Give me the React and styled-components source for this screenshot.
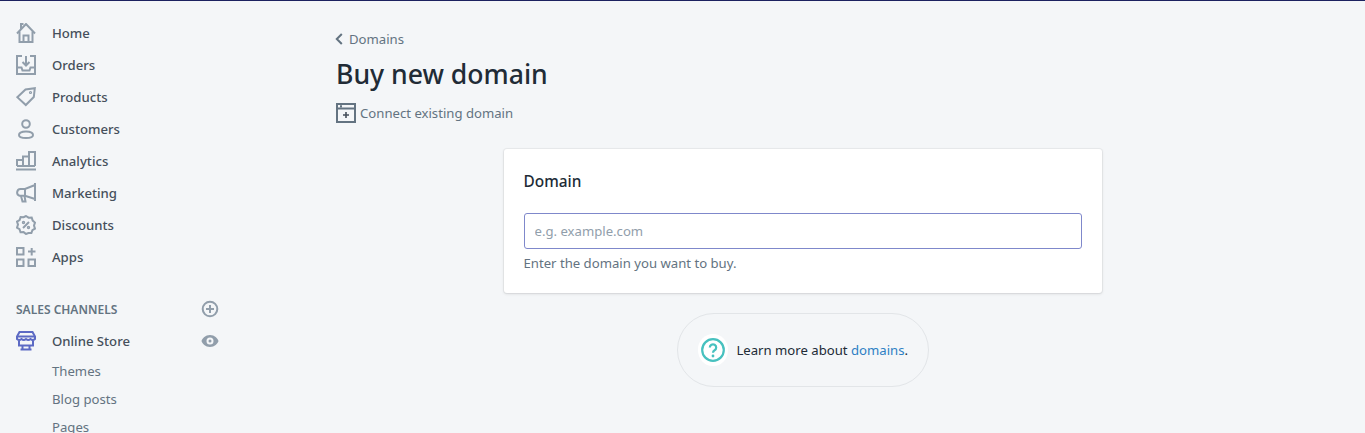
import styled, { createGlobalStyle } from "styled-components"

const Global = createGlobalStyle`
    html, body {
        margin: 0;
        padding: 0;
        height: 100%;
        overflow: hidden;
        background: #f4f6f8;
    }
    body {
        font-family: "Noto Sans", "Open Sans", sans-serif;
        color: #212b36;
    }
`;

const icons = {
    home: <>
        <path d="M1 10.500 10 1l9 9.500M5 5.800V1h2.500" />
        <path d="M3.500 8.500V19h13V8.500" />
        <path d="M7.500 19v-6.500h5V19" />
    </>,
    orders: <>
        <path d="M6 1H1v18h18V1h-5" />
        <path d="M1 12.500h4.500l1 3h7l1-3H19" />
        <path d="M10 1v9M6.500 7l3.500 3.500L13.500 7" />
    </>,
    products: <>
        <path d="M1.300 10.200 9.500 2.500l9.300-1.300-1 8.800-8 8z" />
        <circle cx="14.500" cy="5.500" r=".6" />
    </>,
    customers: <>
        <circle cx="10" cy="5" r="3.800" />
        <path d="M3 16c0-2.400 3-3.500 7-3.500s7 1.100 7 3.500c0 1.900-3 3-7 3s-7-1.100-7-3z" />
    </>,
    analytics: <>
        <path d="M0 18.500h20" />
        <path d="M1 15V9h6v6M7 15V5.500h6V15M13 15V1h6v14M1 15h18" />
    </>,
    marketing: <>
        <path d="M19 0v18M19 2 9 6H4.500a3.500 3.500 0 0 0-1 6.800H9l10 3.200" />
        <path d="M9 6v7M5 13l1.500 5.500h3L8.500 13" />
    </>,
    discounts: <>
        <path d="M10 1l2.600 1.700 3.100-.1 1 3 2.300 2-1 3 1 3-2.600 1.600-1 2.900-3-.1L10 19l-2.400-1.900-3.100.1-1-3L1 12.600l1-3-1-3 2.600-1.600 1-2.900 3 .1z" />
        <path d="m7 13 6-6" />
        <circle cx="7.500" cy="7.500" r=".7" />
        <circle cx="12.500" cy="12.500" r=".7" />
    </>,
    apps: <>
        <path d="M1 1h6.500v6.500H1zM1 12.500h6.500V19H1zM12.500 12.500H19V19h-6.500zM15.700 1v7.500M12 4.500h7.500" />
    </>,
}

const navItems = [
    ["home", "Home"],
    ["orders", "Orders"],
    ["products", "Products"],
    ["customers", "Customers"],
    ["analytics", "Analytics"],
    ["marketing", "Marketing"],
    ["discounts", "Discounts"],
    ["apps", "Apps"],
]

function NavIcon({ name }) {
    return (
        <Icon viewBox="0 0 20 20">
            {icons[name]}
        </Icon>
    )
}

export default function App() {
    return (
        <Page>
            <Global />
            <TopLine />
            <Layout>
                <Sidebar>
                    <NavList>
                        {navItems.map(([name, label]) => (
                            <NavItem key={name}>
                                <NavIcon name={name} />
                                <span>{label}</span>
                            </NavItem>
                        ))}
                    </NavList>
                    <ChannelsHead>
                        <ChannelsTitle>SALES CHANNELS</ChannelsTitle>
                        <SideAction viewBox="0 0 20 20">
                            <circle cx="10" cy="10" r="7.300" fill="none" stroke="#919eab" strokeWidth="2" />
                            <path d="M10 6v8M6 10h8" fill="none" stroke="#919eab" strokeWidth="2" />
                        </SideAction>
                    </ChannelsHead>
                    <StoreRow>
                        <StoreIcon viewBox="0 0 20 20">
                            <path d="M3.500 1h13L19 5.500V8c-1.500 1.300-3 1.300-4.500 0-1.500 1.300-3 1.300-4.500 0-1.500 1.300-3 1.300-4.500 0C4 9.300 2.500 9.300 1 8V5.500z" />
                            <path d="M1 5.500h18M3 9.500V14.500h14V9.500M6.500 14.500V18M13.500 14.500V18M4.500 18.500h11" />
                        </StoreIcon>
                        <span>Online Store</span>
                        <EyeAction viewBox="0 0 20 20">
                            <path fill="#919eab" fillRule="evenodd" d="M10 4C5.500 4 2.200 7.500 1.500 10c.7 2.500 4 6 8.500 6s7.800-3.500 8.500-6C17.800 7.500 14.500 4 10 4zm0 9.500a3.500 3.500 0 1 1 0-7 3.500 3.500 0 0 1 0 7zm0-2a1.500 1.500 0 1 0 0-3 1.500 1.500 0 0 0 0 3z" />
                        </EyeAction>
                    </StoreRow>
                    <SubList>
                        <SubItem>Themes</SubItem>
                        <SubItem>Blog posts</SubItem>
                        <SubItem>Pages</SubItem>
                    </SubList>
                </Sidebar>
                <Main>
                    <Back>
                        <svg width="8" height="12" viewBox="0 0 8 12">
                            <path d="M6.800 1 1.800 6l5 5" fill="none" stroke="#637381" strokeWidth="2" />
                        </svg>
                        <span>Domains</span>
                    </Back>
                    <Title>Buy new domain</Title>
                    <Connect>
                        <svg width="20" height="20" viewBox="0 0 20 20">
                            <path d="M1 1h18v18H1zM1 5.500h18M4 3.200h2" fill="none" stroke="#637381" strokeWidth="2" />
                            <path d="M10 9v6M7 12h6" fill="none" stroke="#454f5b" strokeWidth="1.600" />
                        </svg>
                        <span>Connect existing domain</span>
                    </Connect>
                    <Card>
                        <CardTitle>Domain</CardTitle>
                        <Input placeholder="e.g. example.com" />
                        <Help>Enter the domain you want to buy.</Help>
                    </Card>
                    <Footer>
                        <QuestionBadge>
                            <svg width="24" height="24" viewBox="0 0 24 24">
                                <circle cx="12" cy="12" r="10.800" fill="none" stroke="#47c1bf" strokeWidth="2.200" />
                                <path d="M8.800 9.500a3.200 3.200 0 1 1 4.800 2.800c-1 .6-1.600 1.100-1.600 2.400" fill="none" stroke="#47c1bf" strokeWidth="2.200" />
                                <circle cx="12" cy="18" r="1.400" fill="#47c1bf" />
                            </svg>
                        </QuestionBadge>
                        <span>Learn more about <FooterLink>domains</FooterLink>.</span>
                    </Footer>
                </Main>
            </Layout>
        </Page>
    )
}

const Page = styled.div`
    height: 433px;
    overflow: hidden;
    background: #f4f6f8;
`;

const TopLine = styled.div`
    height: 1px;
    background: #1c2260;
`;

const Layout = styled.div`
    display: flex;
`;

const Sidebar = styled.nav`
    width: 240px;
    flex-shrink: 0;
    padding-top: 16px;
    box-sizing: border-box;
`;

const NavList = styled.div`
    display: flex;
    flex-direction: column;
`;

const NavItem = styled.div`
    display: flex;
    align-items: center;
    height: 32px;
    padding: 0 21px 0 16px;
    gap: 16px;
    font-size: 13.15px;
    font-weight: 500;
    color: #454f5b;
`;

const StoreRow = styled(NavItem)`
    margin-top: 6px;
`;

const Icon = styled.svg`
    width: 20px;
    height: 20px;
    fill: none;
    stroke: #919eab;
    stroke-width: 2;
    flex-shrink: 0;
`;

const ChannelsHead = styled.div`
    display: flex;
    align-items: center;
    justify-content: space-between;
    height: 20px;
    margin-top: 26px;
    padding: 0 20px 0 16px;
`;

const ChannelsTitle = styled.div`
    font-size: 12px;
    font-weight: 600;
    color: #637381;
`;

const SideAction = styled.svg`
    width: 20px;
    height: 20px;
`;

const EyeAction = styled(SideAction)`
    margin-left: auto;
    margin-right: -1px;
`;

const StoreIcon = styled(Icon)`
    stroke: #5c6ac4;
`;

const SubList = styled.div`
    display: flex;
    flex-direction: column;
    padding-left: 52px;
`;

const SubItem = styled.div`
    height: 28px;
    line-height: 28px;
    font-size: 13.15px;
    color: #637381;
`;

const Main = styled.main`
    flex: 1;
    padding: 0 96px;
    display: flex;
    flex-direction: column;
    align-items: flex-start;
`;

const Back = styled.div`
    display: flex;
    align-items: center;
    gap: 6px;
    height: 20px;
    margin-top: 28px;
    margin-left: -1px;
    font-size: 13.15px;
    color: #637381;
`;

const Title = styled.h1`
    margin: 7px 0 0;
    font-size: 26.6px;
    line-height: 36px;
    font-weight: 500;
    color: #212b36;
`;

const Connect = styled.div`
    display: flex;
    align-items: center;
    gap: 4px;
    height: 20px;
    margin-top: 11px;
    font-size: 13.15px;
    color: #637381;
`;

const Card = styled.section`
    align-self: center;
    width: 598px;
    box-sizing: border-box;
    margin-top: 26px;
    padding: 20px;
    height: 144px;
    background: #ffffff;
    border-radius: 3px;
    box-shadow: 0 0 0 1px rgba(63, 63, 68, 0.05), 0 1px 3px 0 rgba(63, 63, 68, 0.15);
`;

const CardTitle = styled.h2`
    margin: 1px 0 0;
    font-size: 15.4px;
    line-height: 24px;
    font-weight: 500;
    color: #212b36;
`;

const Input = styled.input`
    display: block;
    width: 100%;
    box-sizing: border-box;
    height: 36px;
    margin-top: 19px;
    padding: 0 10px;
    border: 1px solid #7f88cb;
    border-radius: 3px;
    background: #ffffff;
    outline: none;
    font: inherit;
    font-size: 13.15px;

    &::placeholder {
        color: #919eab;
        opacity: 1;
    }
`;

const Help = styled.div`
    margin-top: 4px;
    font-size: 13.15px;
    line-height: 20px;
    color: #637381;
`;

const Footer = styled.div`
    align-self: center;
    display: flex;
    align-items: center;
    gap: 8px;
    box-sizing: border-box;
    width: 252px;
    height: 74px;
    margin-top: 20px;
    margin-left: 1px;
    padding: 0 20px;
    border: 1px solid #e2e5e8;
    border-radius: 37px;
    font-size: 13.15px;
    white-space: nowrap;
    color: #212b36;
`;

const QuestionBadge = styled.div`
    display: flex;
    align-items: center;
    justify-content: center;
    width: 32px;
    height: 32px;
    border-radius: 50%;
    background: #ffffff;
`;

const FooterLink = styled.a`
    color: #2d7fc4;
`;
